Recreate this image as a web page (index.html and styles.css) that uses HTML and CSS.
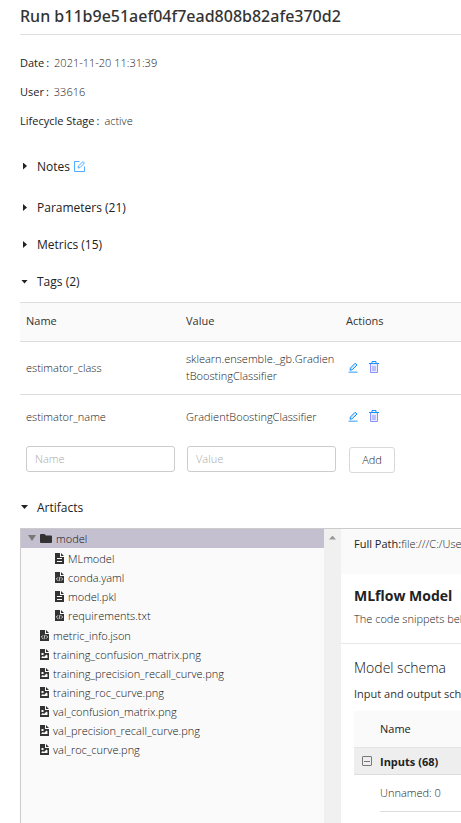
FILE: index.html
```html
<!DOCTYPE html>
<html lang="en">
<head>
<meta charset="utf-8">
<title>Run b11b9e51aef04f7ead808b82afe370d2</title>
<link rel="stylesheet" href="styles.css">
</head>
<body>
<svg class="sprite" aria-hidden="true">
  <symbol id="file-text" viewBox="0 0 9 11"><path fill="#333" d="M0 0h5v4h4v7H0zM6 0l3 3H6z"/><path stroke="#fafafa" d="M2 5.5h5M2 8.5h5"/></symbol>
  <symbol id="file-code" viewBox="0 0 9 11"><path fill="#333" d="M0 0h5v4h4v7H0zM6 0l3 3H6z"/><path fill="none" stroke="#fafafa" stroke-width=".8" d="M3 5.3 1.3 7 3 8.7M6 5.3 7.7 7 6 8.7M5 4.8 4 9.2"/></symbol>
  <symbol id="file-image" viewBox="0 0 9 11"><path fill="#333" d="M0 0h5v4h4v7H0zM6 0l3 3H6z"/><path fill="#fafafa" d="M1.5 4h2v2h-2zM1.500 9V8L3 7l1 1 2.500-2.500L7.500 6.500V9z"/></symbol>
  <symbol id="pencil" viewBox="0 0 10 11"><path fill="#d3e9ff" stroke="#1890ff" d="M2 8.200 2.400 6 7.200 1.200 9 3 4.200 7.800z"/><path stroke="#74bcff" stroke-width="1.500" d="M.500 10.200h9"/></symbol>
  <symbol id="trash" viewBox="0 0 10 12"><path fill="#eeeaff" stroke="#8793ff" d="M1.500 3v8.500h7V3"/><path fill="none" stroke="#1890ff" d="M0 2.500h10M3 2V.500h4V2"/><path stroke="#8793ff" d="M4 5v5M6 5v5"/></symbol>
</svg>
<header class="title-bar"><h1>Run b11b9e51aef04f7ead808b82afe370d2</h1></header>
<main>
  <dl class="meta">
    <div><dt>Date</dt><dd>2021-11-20 11:31:39</dd></div>
    <div><dt>User</dt><dd>33616</dd></div>
    <div><dt>Lifecycle Stage</dt><dd>active</dd></div>
  </dl>
  <div class="section notes">
    <button class="toggle"><span class="caret"></span>Notes</button>
    <button class="icon-button" aria-label="Edit notes"><svg width="11" height="11" viewBox="0 0 11 11" fill="none" stroke="#55adff"><path d="M5.500 .500h-5v10h10v-5M4 7l.400-2L9 .600 10.400 2 6 6.600z"/></svg></button>
  </div>
  <div class="section"><button class="toggle"><span class="caret"></span>Parameters (21)</button></div>
  <div class="section"><button class="toggle"><span class="caret"></span>Metrics (15)</button></div>
  <div class="section"><button class="toggle"><span class="caret open"></span>Tags (2)</button></div>
  <table class="tags">
    <thead><tr><th>Name</th><th>Value</th><th>Actions</th></tr></thead>
    <tbody>
      <tr><td>estimator_class</td><td>sklearn.ensemble._gb.GradientBoostingClassifier</td><td><div class="actions"><button class="icon-button" aria-label="Edit"><svg width="10" height="11"><use href="#pencil"/></svg></button><button class="icon-button" aria-label="Delete"><svg width="10" height="12"><use href="#trash"/></svg></button></div></td></tr>
      <tr><td>estimator_name</td><td>GradientBoostingClassifier</td><td><div class="actions"><button class="icon-button" aria-label="Edit"><svg width="10" height="11"><use href="#pencil"/></svg></button><button class="icon-button" aria-label="Delete"><svg width="10" height="12"><use href="#trash"/></svg></button></div></td></tr>
    </tbody>
  </table>
  <form class="add-tag">
    <input type="text" aria-label="Name" placeholder="Name">
    <input type="text" aria-label="Value" placeholder="Value">
    <button type="button">Add</button>
  </form>
  <div class="section artifacts-heading"><button class="toggle"><span class="caret open"></span>Artifacts</button></div>
  <section class="artifacts">
    <nav class="tree">
      <ul>
        <li><div class="node folder"><span class="arrow"></span><svg width="12" height="9" viewBox="0 0 12 9"><path fill="#333" d="M0 1q0-1 1-1h3.500L6 1.500h5q1 0 1 1V8q0 1-1 1H1Q0 9 0 8z"/></svg>model</div>
          <ul class="children">
            <li class="node"><svg width="9" height="11"><use href="#file-text"/></svg>MLmodel</li>
            <li class="node"><svg width="9" height="11"><use href="#file-code"/></svg>conda.yaml</li>
            <li class="node"><svg width="9" height="11"><use href="#file-text"/></svg>model.pkl</li>
            <li class="node"><svg width="9" height="11"><use href="#file-code"/></svg>requirements.txt</li>
          </ul>
        </li>
        <li class="node"><svg width="9" height="11"><use href="#file-code"/></svg>metric_info.json</li>
        <li class="node"><svg width="9" height="11"><use href="#file-image"/></svg>training_confusion_matrix.png</li>
        <li class="node"><svg width="9" height="11"><use href="#file-image"/></svg>training_precision_recall_curve.png</li>
        <li class="node"><svg width="9" height="11"><use href="#file-image"/></svg>training_roc_curve.png</li>
        <li class="node"><svg width="9" height="11"><use href="#file-image"/></svg>val_confusion_matrix.png</li>
        <li class="node"><svg width="9" height="11"><use href="#file-image"/></svg>val_precision_recall_curve.png</li>
        <li class="node"><svg width="9" height="11"><use href="#file-image"/></svg>val_roc_curve.png</li>
      </ul>
    </nav>
    <div class="scrollbar"><span></span></div>
    <div class="detail">
      <div class="path"><b>Full Path:</b>file:///C:/Use</div>
      <div class="intro"><h2>MLflow Model</h2><p>The code snippets bel</p></div>
      <div class="schema">
        <h3>Model schema</h3>
        <p>Input and output sch</p>
        <table>
          <thead><tr><th>Name</th></tr></thead>
          <tbody>
            <tr class="group"><td><div><button class="collapse" aria-label="Collapse inputs"></button>Inputs (68)</div></td></tr>
            <tr><td><div class="field">Unnamed: 0</div></td></tr>
          </tbody>
        </table>
      </div>
    </div>
  </section>
</main>
</body>
</html>
```
FILE: styles.css
```css
* { box-sizing: border-box; }
html, body { height: 100%; }
body {
  margin: 0;
  padding-left: 20px;
  display: flex;
  flex-direction: column;
  overflow: hidden;
  background: #fff;
  color: #222;
  font: 300 11px/17px "Open Sans", "Noto Sans", sans-serif;
}
h1, h2, h3, p, dl, dd, ul { margin: 0; padding: 0; }
ul { list-style: none; }
button { font: inherit; color: inherit; background: none; border: 0; padding: 0; }
svg { display: block; flex: none; }
.sprite { position: absolute; width: 0; height: 0; }
main { flex: 1; min-height: 0; display: flex; flex-direction: column; }

.title-bar { height: 35px; padding-top: 4px; border-bottom: 1px solid #e0e0e0; }
h1 { font-family: "Noto Sans", sans-serif; font-size: 16px; line-height: 24px; font-weight: 500; color: #333; }

.meta { padding-top: 19px; margin-bottom: 2px; }
.meta div { display: flex; height: 29px; line-height: 17px; }
.meta dt { color: #222; font-weight: 400; }
.meta dt::after { content: ":"; margin: 0 5px 0 2px; }

.section { display: flex; align-items: center; gap: 4px; height: 37px; padding-left: 3px; font-size: 12px; font-weight: 400; color: #222; }
.section.notes { height: 46px; }
.toggle { display: flex; align-items: center; }
.caret { width: 14px; }
.caret::before { content: ""; display: block; width: 4px; height: 7px; background: #222; clip-path: polygon(0 0, 100% 50%, 0 100%); }
.caret.open::before { width: 7px; height: 4px; margin-left: -2px; clip-path: polygon(0 0, 100% 0, 50% 100%); }

table { width: 100%; border-spacing: 0; border-collapse: collapse; table-layout: fixed; text-align: left; }
.tags { border-top: 1px solid #ddd; margin-top: 2px; }
.tags th { height: 39px; padding: 0 6px 4px; background: #fafafa; border-bottom: 1px solid #ddd; color: #333; font-weight: 500; }
.tags th:nth-child(-n+2) { width: 160px; }
.tags td { height: 53px; padding: 0 4px 2px 6px; overflow-wrap: anywhere; }
.tags tr:first-child td { border-bottom: 1px solid #ddd; }
.tags tr:last-child td { height: 45px; }
.actions { display: flex; align-items: center; gap: 11px; padding-left: 2px; }

.add-tag { display: flex; align-items: flex-start; gap: 12px; padding: 6px; }
.add-tag input { width: 149px; height: 26px; padding: 0 8px; border: 1px solid #ccc; border-radius: 3px; font: inherit; background: #fff; }
.add-tag input::placeholder { color: #aaa; }
.add-tag button { width: 46px; height: 26px; margin: 1px; border: 1px solid #d9d9d9; border-radius: 3px; }
.artifacts-heading { margin: 9px 0 2px; }

.artifacts { flex: 1; min-height: 0; display: flex; border-top: 1px solid #ccc; border-left: 1px solid #ccc; overflow: hidden; }
.tree { flex: 0 0 303px; background: #fafafa; color: #111; }
.node { display: flex; align-items: center; gap: 4px; height: 19px; padding-left: 19px; white-space: nowrap; }
.folder { padding-left: 7px; background: #c5c0cf; }
.arrow { width: 8px; height: 6px; background: #777; clip-path: polygon(0 0, 100% 0, 50% 100%); }
.children { padding: 1px 0; }
.children .node { padding-left: 34px; }
.scrollbar { flex: 0 0 17px; background: #f0f0f0; padding: 7px 5px; }
.scrollbar span { display: block; width: 7px; height: 4px; background: #999; clip-path: polygon(50% 0, 100% 100%, 0 100%); }
.detail { flex: 1; min-width: 0; overflow: hidden; white-space: nowrap; }
.path { height: 45px; padding: 6px 13px; background: #fafafa; }
.path b { font-weight: 400; color: #222; }
.intro { height: 70px; padding: 11px 13px; border-bottom: 1px solid #e8e8e8; }
h2 { font-size: 14px; line-height: 22px; font-weight: 700; color: #222; }
.intro p { line-height: 23px; }
.schema { padding: 13px 0 0 13px; }
h3 { font-size: 14px; line-height: 22px; font-weight: 300; color: #111; }
.schema p { line-height: 30px; margin-bottom: 2px; font-weight: 400; color: #333; }
.schema th { height: 37px; padding: 0 0 0 26px; background: #fafafa; border-bottom: 1px solid #e4e4e4; color: #222; font-weight: 500; }
.schema td { padding: 0; }
.group td { height: 27px; background: #eee; border-bottom: 1px solid #ddd; color: #222; font-weight: 700; }
.group div { display: flex; align-items: center; gap: 8px; padding-left: 8px; }
.collapse { width: 10px; height: 10px; border: 1px solid #777; border-radius: 1px; background: linear-gradient(#777, #777) center / 6px 1px no-repeat; }
.field { height: 37px; margin-left: 26px; line-height: 35px; border-bottom: 1px solid #ddd; }
```
